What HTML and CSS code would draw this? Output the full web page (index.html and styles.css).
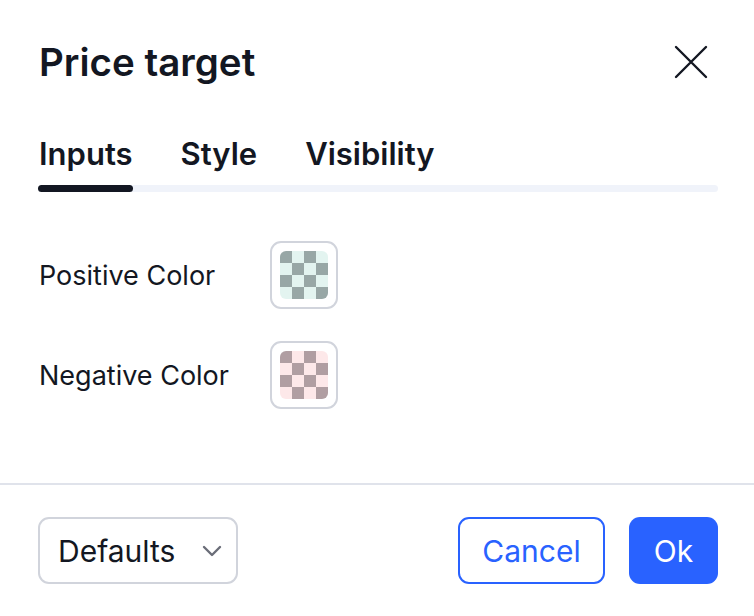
FILE: index.html
```html
<!DOCTYPE html>
<html>
<head>
<meta charset="utf-8">
<link rel="stylesheet" href="styles.css">
</head>
<body>
<div class="dialog">
  <div class="header">
    <h1 class="title">Price target</h1>
    <button class="close" aria-label="Close">
      <svg width="34" height="34" viewBox="0 0 34 34"><path d="M2 2L32 32M32 2L2 32" stroke="#131722" stroke-width="2.4" stroke-linecap="round" fill="none"/></svg>
    </button>
  </div>
  <div class="tabs">
    <div class="tab-list">
      <span class="tab active">Inputs</span>
      <span class="tab">Style</span>
      <span class="tab">Visibility</span>
    </div>
    <div class="track"><div class="indicator"></div></div>
  </div>
  <div class="content">
    <div class="row">
      <span class="label">Positive Color</span>
      <div class="swatch"><div class="checker positive"></div></div>
    </div>
    <div class="row">
      <span class="label">Negative Color</span>
      <div class="swatch"><div class="checker negative"></div></div>
    </div>
  </div>
  <div class="footer">
    <div class="select">
      <span>Defaults</span>
      <svg width="20" height="12" viewBox="0 0 20 12"><path d="M2 2L10 10L18 2" stroke="#6a6d78" stroke-width="2.4" fill="none" stroke-linecap="round" stroke-linejoin="round"/></svg>
    </div>
    <div class="actions">
      <button class="btn btn-outline">Cancel</button>
      <button class="btn btn-primary">Ok</button>
    </div>
  </div>
</div>
</body>
</html>
```
FILE: styles.css
```css
* { box-sizing: border-box; }
html, body { margin: 0; padding: 0; background: #ffffff; }
body {
  font-family: Inter, "Noto Sans", "Liberation Sans", sans-serif;
  color: #131722;
  width: 754px;
  height: 616px;
  overflow: hidden;
}
.dialog { width: 754px; height: 616px; display: flex; flex-direction: column; }
.header {
  display: flex;
  align-items: center;
  justify-content: space-between;
  padding: 38px 46px 0 39px;
  height: 86px;
}
.title { margin: 0; font-size: 38.5px; font-weight: 600; line-height: 48px; }
.close { border: 0; background: none; padding: 0; width: 34px; height: 34px; display: flex; }
.tabs { padding: 0 36px 0 38px; margin-top: 48px; }
.tab-list { display: flex; gap: 48px; padding-left: 1px; }
.tab { font-size: 31px; font-weight: 600; line-height: 40px; }
.track { margin-top: 11px; height: 7px; background: #f0f3fa; border-radius: 4px; }
.indicator { width: 95px; height: 7px; background: #131722; border-radius: 4px; }
.content { padding: 49px 0 0 39px; display: flex; flex-direction: column; gap: 32px; }
.row { display: flex; align-items: center; height: 68px; }
.label { width: 231px; font-size: 27px; line-height: 34px; padding-top: 2px; }
.swatch {
  width: 68px; height: 68px;
  border: 2px solid #d1d4dc;
  border-radius: 11px;
  display: flex; align-items: center; justify-content: center;
}
.checker { width: 48px; height: 48px; border-radius: 6px; }
.checker.positive {
  background: conic-gradient(#e3f4f0 0 25%, #98a7a6 0 50%, #e3f4f0 0 75%, #98a7a6 0) 0 0 / 24px 24px;
}
.checker.negative {
  background: conic-gradient(#fde8e9 0 25%, #b09ea2 0 50%, #fde8e9 0 75%, #b09ea2 0) 0 0 / 24px 24px;
}
.footer {
  margin-top: auto;
  border-top: 2px solid #e0e3eb;
  height: 133px;
  padding: 32px 36px 0 38px;
  display: flex;
  justify-content: space-between;
  align-items: flex-start;
}
.select {
  width: 200px; height: 67px;
  border: 2px solid #d1d4dc; border-radius: 11px;
  display: flex; align-items: center; justify-content: space-between;
  padding: 0 14px 0 18px;
  font-size: 30px;
}
.actions { display: flex; gap: 24px; }
.btn {
  height: 67px; border-radius: 11px;
  font-family: inherit; font-size: 30px;
  padding: 0;
}
.btn-outline { width: 147px; border: 2px solid #2962ff; background: #fff; color: #2962ff; }
.btn-primary { width: 89px; border: 0; background: #2962ff; color: #fff; }
```
